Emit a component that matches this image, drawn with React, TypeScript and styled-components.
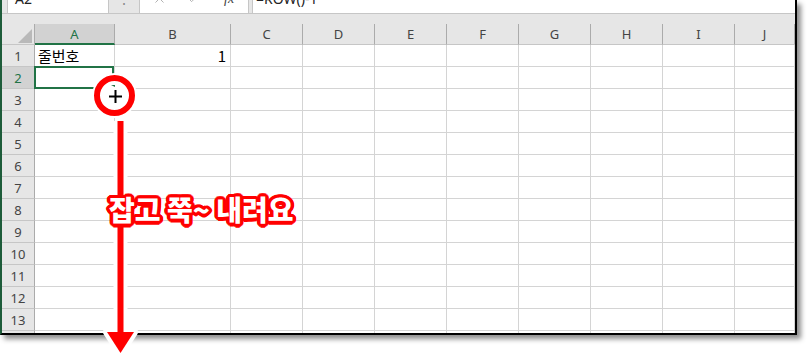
import React from "react";
import styled, { createGlobalStyle, css } from "styled-components";
import { X, Check } from "lucide-react";

const GlobalStyle = createGlobalStyle`
  html, body {
    margin: 0;
    padding: 0;
    background: #ffffff;
  }
  body {
    font-family: "Noto Sans", "Noto Sans CJK KR", sans-serif;
  }
`;

const COLUMNS = ["A", "B", "C", "D", "E", "F", "G", "H", "I", "J"];
const ROWS = Array.from({ length: 14 }, (_, i) => i + 1);
const GREEN = "#217346";

// 16방향 그림자로 글자 테두리 만들기
const outline = Array.from({ length: 16 }, (_, i) => {
  const a = (i / 16) * Math.PI * 2;
  return `${(Math.cos(a) * 3.5).toFixed(2)}px ${(Math.sin(a) * 3.5).toFixed(2)}px 0 #ff0000`;
}).join(", ");

export default function App() {
  return (
    <>
      <GlobalStyle />
      <Stage>
        <Window>
          <FormulaBar>
            <NameBox>A2</NameBox>
            <Dots>⋮</Dots>
            <FuncBox>
              <X size={15} strokeWidth={1.4} color="#a8a8a8" />
              <Check size={15} strokeWidth={1.4} color="#a8a8a8" />
              <Fx>fx</Fx>
            </FuncBox>
            <FormulaInput>=ROW()-1</FormulaInput>
          </FormulaBar>
          <Spacer />
          <Sheet>
            <Corner />
            {COLUMNS.map((c) => (
              <ColHeader key={c} $selected={c === "A"}>
                {c}
              </ColHeader>
            ))}
            {ROWS.map((r) => (
              <React.Fragment key={r}>
                <RowHeader $selected={r === 2}>{r}</RowHeader>
                {COLUMNS.map((c) => (
                  <Cell
                    key={c + r}
                    $align={c === "B" ? "right" : "left"}
                    $selected={c === "A" && r === 2}
                  >
                    {r === 1 && c === "A" ? "줄번호" : ""}
                    {r === 1 && c === "B" ? "1" : ""}
                  </Cell>
                ))}
              </React.Fragment>
            ))}
          </Sheet>
        </Window>

        <Ring>
          <svg width="28" height="28" viewBox="0 0 28 28">
            <path d="M 10 3 L 14 3 L 14 5 Z" fill={GREEN} />
            <path
              d="M 14.5 7.5 V 21.5 M 7.5 14.5 H 21.5"
              stroke="#ffffff"
              strokeWidth="4"
              fill="none"
            />
            <path
              d="M 14.5 8 V 21 M 8 14.5 H 21"
              stroke="#000000"
              strokeWidth="2"
              fill="none"
            />
          </svg>
        </Ring>

        <Arrow width="44" height="245" viewBox="0 0 44 245">
          <path d="M 20.5 6 V 218" stroke="#ffffff" strokeWidth="14" fill="none" />
          <polygon
            points="7,217 34,217 20.5,238"
            fill="#ffffff"
            stroke="#ffffff"
            strokeWidth="8"
            strokeLinejoin="round"
          />
          <path d="M 20.5 6 V 218" stroke="#ff0000" strokeWidth="6" fill="none" />
          <polygon points="7,217 34,217 20.5,238" fill="#ff0000" />
        </Arrow>

        <Caption>잡고 쭉~ 내려요</Caption>
      </Stage>
    </>
  );
}

const Stage = styled.div`
  position: relative;
  width: 808px;
  height: 362px;
  overflow: hidden;
`;

const Window = styled.div`
  box-sizing: border-box;
  width: 797px;
  height: 335px;
  display: flex;
  flex-direction: column;
  background: #e6e6e6;
  border-left: 2px solid #1e5c3a;
  border-right: 2px solid #000000;
  border-bottom: 2px solid #000000;
  box-shadow: 4px 4px 5px rgba(0, 0, 0, 0.45);
  overflow: hidden;
`;

/* 화면 위쪽에서 잘린 수식 입력줄: 아랫부분만 보인다 */
const FormulaBar = styled.div`
  flex: none;
  height: 13px;
  display: flex;
  align-items: flex-start;
  border-bottom: 1px solid #c6c6c6;
  overflow: hidden;
`;

const barBox = css`
  box-sizing: border-box;
  flex: none;
  height: 30px;
  margin-top: -17px;
  display: flex;
  align-items: center;
  background: #ffffff;
  border: 1px solid #c6c6c6;
  border-bottom: none;
  font-size: 14px;
  line-height: 18px;
  color: #222;
`;

const NameBox = styled.div`
  ${barBox};
  margin-left: 5px;
  width: 102px;
  padding-left: 7px;
`;

const Dots = styled.div`
  flex: none;
  width: 30px;
  height: 30px;
  margin-top: -17px;
  display: flex;
  align-items: center;
  justify-content: center;
  color: #8a8a8a;
  font-size: 14px;
`;

const FuncBox = styled.div`
  ${barBox};
  width: 110px;
  padding-left: 12px;
  gap: 19px;
`;

const Fx = styled.span`
  font-family: "Liberation Serif", serif;
  font-style: italic;
  font-size: 14px;
  color: #444;
  margin-left: 4px;
`;

const FormulaInput = styled.div`
  ${barBox};
  flex: 1;
  margin-left: 3px;
  padding-left: 3px;
  border-right: none;
`;

const Spacer = styled.div`
  flex: none;
  height: 10px;
`;

const Sheet = styled.div`
  flex: 1;
  display: grid;
  grid-template-columns: 33px 80px 116px repeat(7, 72px) 1fr;
  grid-template-rows: 21px;
  grid-auto-rows: 22px;
  background: #ffffff;
  overflow: hidden;
`;

const headerBase = css<{ $selected?: boolean }>`
  box-sizing: border-box;
  position: relative;
  display: flex;
  align-items: center;
  justify-content: center;
  font-family: "Noto Sans", sans-serif;
  font-size: 13px;
  background: ${(p) => (p.$selected ? "#d2d2d2" : "#e6e6e6")};
  color: ${(p) => (p.$selected ? GREEN : "#444444")};
`;

const Corner = styled.div`
  box-sizing: border-box;
  position: relative;
  background: #e6e6e6;
  border-right: 1px solid #ababab;
  border-bottom: 1px solid #c6c6c6;
  &::after {
    content: "";
    position: absolute;
    right: 2px;
    bottom: 1px;
    width: 0;
    height: 0;
    border-left: 14px solid transparent;
    border-bottom: 14px solid #b9b9b9;
  }
`;

const ColHeader = styled.div<{ $selected?: boolean }>`
  ${headerBase};
  border-right: 1px solid #ababab;
  border-bottom: ${(p) => (p.$selected ? `2px solid ${GREEN}` : "1px solid #c6c6c6")};
  padding-top: ${(p) => (p.$selected ? "1px" : "0")};
`;

const RowHeader = styled.div<{ $selected?: boolean }>`
  ${headerBase};
  border-right: 1px solid #ababab;
  border-bottom: 1px solid #c6c6c6;
`;

const Cell = styled.div<{ $align: "left" | "right"; $selected?: boolean }>`
  box-sizing: border-box;
  position: relative;
  display: flex;
  align-items: center;
  justify-content: ${(p) => (p.$align === "right" ? "flex-end" : "flex-start")};
  padding: 0 4px 0 3px;
  border-right: 1px solid #d4d4d4;
  border-bottom: 1px solid #d4d4d4;
  font-family: "Noto Sans CJK KR", "Noto Sans", sans-serif;
  font-size: 15px;
  color: #000000;
  ${(p) =>
    p.$selected &&
    css`
      &::after {
        content: "";
        position: absolute;
        top: -1px;
        left: -1px;
        right: 0;
        bottom: -1px;
        border: 2px solid ${GREEN};
        z-index: 2;
      }
    `}
`;

const Ring = styled.div`
  box-sizing: border-box;
  position: absolute;
  left: 94px;
  top: 75px;
  width: 41px;
  height: 41px;
  border-radius: 50%;
  border: 6px solid #ff0000;
  background: #ffffff;
  box-shadow: 0 0 0 2px #ffffff;
  z-index: 5;
  display: flex;
  align-items: center;
  justify-content: center;
`;

const Arrow = styled.svg`
  position: absolute;
  left: 100px;
  top: 115px;
  z-index: 5;
`;

const Caption = styled.div`
  position: absolute;
  left: 109px;
  top: 193px;
  z-index: 6;
  font-family: "Noto Sans CJK KR", sans-serif;
  font-weight: 900;
  font-size: 28px;
  line-height: 32px;
  color: #ffffff;
  white-space: nowrap;
  text-shadow: ${outline};
`;
